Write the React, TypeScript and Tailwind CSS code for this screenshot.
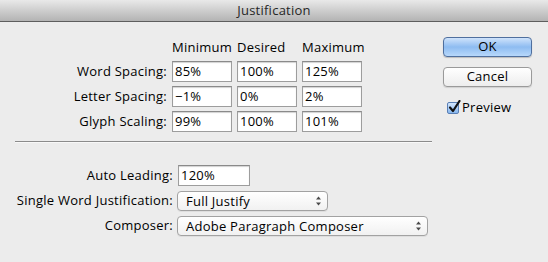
import React from 'react';

const font = { fontFamily: '"Open Sans", "Liberation Sans", sans-serif' };

const rows = [
    { label: 'Word Spacing:', values: ['85%', '100%', '125%'] },
    { label: 'Letter Spacing:', values: ['\u22121%', '0%', '2%'] },
    { label: 'Glyph Scaling:', values: ['99%', '100%', '101%'] },
];

const Field: React.FC<{ value: string; className?: string }> = ({ value, className }) => (
    <div
        className={
            'h-[21px] bg-white border border-[#9d9d9d] border-t-[#8a8a8a] shadow-[inset_0_1px_1px_rgba(0,0,0,0.18)] pl-[2px] flex items-center text-[13px] text-black leading-none ' +
            (className ?? 'w-[60px]')
        }
    >
        {value}
    </div>
);

const Arrows = () => (
    <svg width="7" height="10" viewBox="0 0 7 10">
        <path d="M3.5 0.5 L6 3.5 L1 3.5 Z" fill="#4a4a4a" />
        <path d="M3.5 9.5 L6 6.5 L1 6.5 Z" fill="#4a4a4a" />
    </svg>
);

const Select: React.FC<{ value: string; width: string }> = ({ value, width }) => (
    <div
        className={
            'h-[20px] rounded-[4px] border border-[#a2a2a2] bg-gradient-to-b from-white to-[#f1f1f1] shadow-[0_1px_0_rgba(0,0,0,0.06)] flex items-center justify-between pl-[8px] pr-[5px] text-[13px] text-black leading-none ' +
            width
        }
    >
        <span>{value}</span>
        <Arrows />
    </div>
);

export default function App() {
    return (
        <div className="w-[548px] h-[262px] bg-[#ececec] overflow-hidden text-[13px] tracking-[0.25px] text-black" style={font}>
            <div className="h-[22px] border-b border-[#5e5e5e] bg-gradient-to-b from-[#e9e9e9] to-[#b3b3b3] flex items-center justify-center text-[13px] text-[#262626]">
                Justification
            </div>

            <div className="flex">
                <div className="w-[443px] shrink-0">
                    <div className="pt-[17px] grid grid-cols-[167px_60px_60px_60px] gap-x-[5px] gap-y-[4px]">
                        <div className="h-[18px]" />
                        <div className="h-[18px] flex items-center">Minimum</div>
                        <div className="h-[18px] flex items-center">Desired</div>
                        <div className="h-[18px] flex items-center">Maximum</div>
                        {rows.map((r) => (
                            <React.Fragment key={r.label}>
                                <div className="h-[21px] flex items-center justify-end">{r.label}</div>
                                {r.values.map((v, i) => (
                                    <Field key={i} value={v} />
                                ))}
                            </React.Fragment>
                        ))}
                    </div>

                    <div className="ml-[15px] w-[417px] mt-[9px] h-[2px] border-t border-[#8b8b8b] border-b border-b-[#f8f8f8]" />

                    <div className="mt-[22px] grid grid-cols-[173px_auto] gap-x-[5px] gap-y-[5px] items-center">
                        <div className="text-right">Auto Leading:</div>
                        <Field value="120%" className="w-[72px]" />
                        <div className="text-right">Single Word Justification:</div>
                        <div className="-ml-[1px]">
                            <Select value="Full Justify" width="w-[151px]" />
                        </div>
                        <div className="text-right">Composer:</div>
                        <div className="-ml-[1px]">
                            <Select value="Adobe Paragraph Composer" width="w-[251px]" />
                        </div>
                    </div>
                </div>

                <div className="pt-[15px] w-[89px] flex flex-col">
                    <div className="h-[20px] rounded-[4px] border border-[#4f6f9e] bg-gradient-to-b from-[#cfe3fb] via-[#8ebcf1] to-[#b7d8fb] flex items-center justify-center text-[13px] text-black shadow-[0_1px_1px_rgba(0,0,0,0.2)]">
                        OK
                    </div>
                    <div className="mt-[10px] h-[20px] rounded-[4px] border border-[#9a9a9a] bg-gradient-to-b from-white to-[#ededed] flex items-center justify-center text-[13px] text-black shadow-[0_1px_1px_rgba(0,0,0,0.12)]">
                        Cancel
                    </div>
                    <div className="mt-[11px] ml-[4px] flex items-center gap-[3px]">
                        <div className="relative w-[12px] h-[12px] rounded-[2px] border border-[#5a7fb5] bg-gradient-to-b from-[#d3e6fc] to-[#88b7ee]">
                            <svg className="absolute -top-[3px] left-[0px]" width="13" height="14" viewBox="0 0 13 14">
                                <path d="M2 7.5 L5 11 L11.5 1" fill="none" stroke="#111" strokeWidth="2.2" strokeLinecap="round" strokeLinejoin="round" />
                            </svg>
                        </div>
                        <span>Preview</span>
                    </div>
                </div>
            </div>
        </div>
    );
}
